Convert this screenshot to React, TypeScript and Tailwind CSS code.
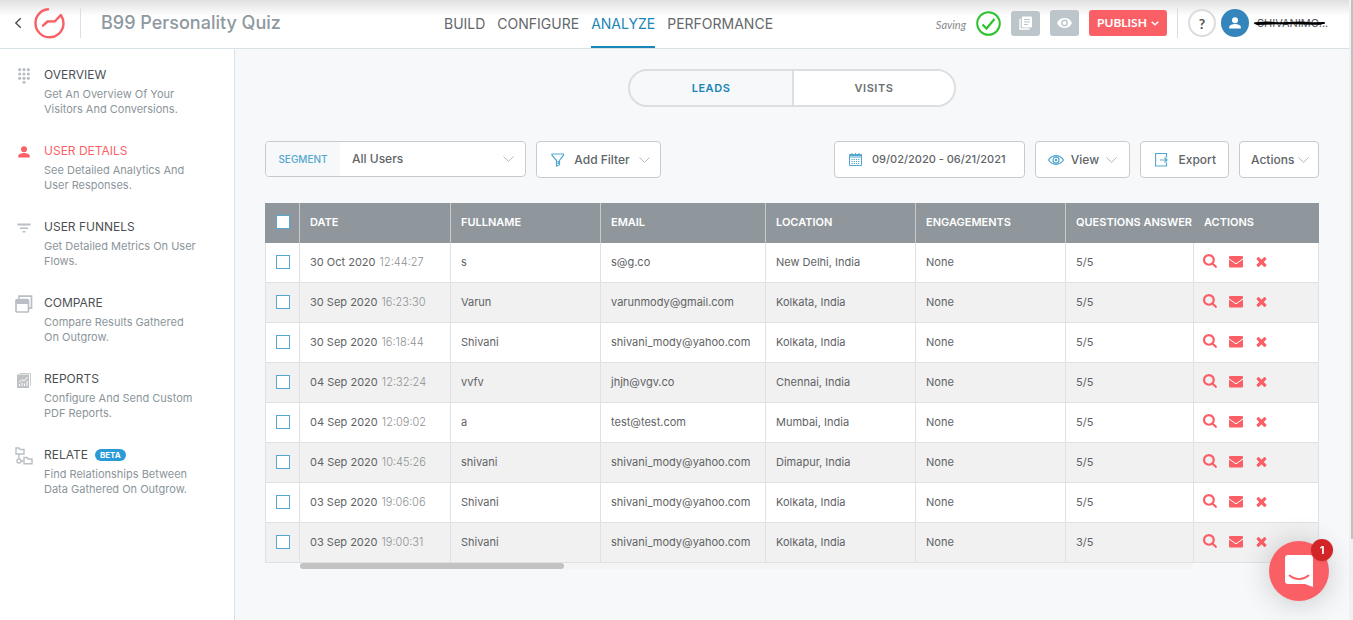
import type { ReactNode } from "react";

type Lead = {
  date: string;
  time: string;
  name: string;
  email: string;
  location: string;
  answered: string;
};

const leads: Lead[] = [
  { date: "30 Oct 2020", time: "12:44:27", name: "s", email: "s@g.co", location: "New Delhi, India", answered: "5/5" },
  { date: "30 Sep 2020", time: "16:23:30", name: "Varun", email: "varunmody@gmail.com", location: "Kolkata, India", answered: "5/5" },
  { date: "30 Sep 2020", time: "16:18:44", name: "Shivani", email: "shivani_mody@yahoo.com", location: "Kolkata, India", answered: "5/5" },
  { date: "04 Sep 2020", time: "12:32:24", name: "vvfv", email: "jhjh@vgv.co", location: "Chennai, India", answered: "5/5" },
  { date: "04 Sep 2020", time: "12:09:02", name: "a", email: "test@test.com", location: "Mumbai, India", answered: "5/5" },
  { date: "04 Sep 2020", time: "10:45:26", name: "shivani", email: "shivani_mody@yahoo.com", location: "Dimapur, India", answered: "5/5" },
  { date: "03 Sep 2020", time: "19:06:06", name: "Shivani", email: "shivani_mody@yahoo.com", location: "Kolkata, India", answered: "5/5" },
  { date: "03 Sep 2020", time: "19:00:31", name: "Shivani", email: "shivani_mody@yahoo.com", location: "Kolkata, India", answered: "3/5" },
];

function Chevron({ className = "text-[#b5b9bc]" }: { className?: string }) {
  return (
    <svg width="11" height="6" viewBox="0 0 11 6" fill="none" stroke="currentColor" className={`shrink-0 ${className}`} aria-hidden="true">
      <path d="M.5.5 5.5 5.3 10.5.5" />
    </svg>
  );
}

function KeypadIcon() {
  const dots = [1.7, 6, 10.3];
  return (
    <svg width="12" height="16" viewBox="0 0 12 16" fill="#b9bfc4" aria-hidden="true">
      {dots.map((y) => dots.map((x) => <circle key={`${x}-${y}`} cx={x} cy={y} r="1.6" />))}
      <circle cx="6" cy="14.3" r="1.5" />
    </svg>
  );
}

function PersonIcon({ className }: { className?: string }) {
  return (
    <svg width="12" height="12" viewBox="0 0 12 12" fill="currentColor" className={className} aria-hidden="true">
      <circle cx="6" cy="3.2" r="3" />
      <path d="M.2 11.5V10C.2 8 3.8 7 6 7s5.800 1 5.800 3v1.500z" />
    </svg>
  );
}

function FunnelLinesIcon() {
  return (
    <svg width="14" height="10" viewBox="0 0 14 10" fill="#b9bfc4" aria-hidden="true">
      <path d="M.5.500h13v2H.5zM3 4.500h8V6H3zM5.500 8h3v1.500h-3z" />
    </svg>
  );
}

function WindowsIcon() {
  return (
    <svg width="18" height="18" viewBox="0 0 18 18" fill="none" stroke="#b9bfc4" aria-hidden="true">
      <path d="M4 3.500V1.200h12.500v12H14" strokeWidth="1.700" />
      <rect x="1" y="4.500" width="12.500" height="12.500" rx="1" strokeWidth="1.700" />
      <path d="M1 5h12.500v4H1z" fill="#b9bfc4" stroke="none" />
    </svg>
  );
}

function ReportIcon() {
  return (
    <svg width="14" height="15" viewBox="0 0 14 15" aria-hidden="true">
      <path d="M2.500.500h11v12" fill="none" stroke="#c9cdd0" />
      <rect x="0" y="1.500" width="12" height="13.500" fill="#bfc2c4" />
      <path d="M2 9.500 5 6.500l2 1.500 3.500-4M2.500 13v-2M5 13V9.500M7.500 13v-2.500M10 13V8" fill="none" stroke="#fff" />
    </svg>
  );
}

function RelateIcon() {
  return (
    <svg width="18" height="18" viewBox="0 0 18 18" fill="none" stroke="#b9bfc4" strokeWidth="1.400" aria-hidden="true">
      <path d="M1 1h3l1 1.500h4V7H1zM9 10.500h3l1 1.500h4v4.700H9zM4 7.500v4M6 14h2.500" />
      <circle cx="4" cy="14" r="2" />
    </svg>
  );
}

function SearchIcon() {
  return (
    <svg width="15" height="15" viewBox="0 0 1792 1792" fill="currentColor" aria-hidden="true">
      <path d="M1152 704q0-185-131.500-316.500t-316.500-131.500-316.500 131.500-131.500 316.500 131.500 316.500 316.500 131.500 316.500-131.500 131.500-316.500zm512 832q0 52-38 90t-90 38q-54 0-90-38l-343-342q-179 124-399 124-143 0-273.500-55.500t-225-150-150-225-55.500-273.500 55.500-273.500 150-225 225-150 273.500-55.500 273.500 55.500 225 150 150 225 55.500 273.500q0 220-124 399l343 343q37 37 37 90z" />
    </svg>
  );
}

function MailIcon() {
  return (
    <svg width="14" height="12" viewBox="0 0 14 12" aria-hidden="true">
      <rect width="14" height="11.500" rx="1.200" fill="currentColor" />
      <path d="M0 3 7 7.800 14 3" fill="none" stroke="#fff" />
    </svg>
  );
}

function CrossIcon() {
  return (
    <svg width="15" height="15" viewBox="0 0 1792 1792" fill="currentColor" aria-hidden="true">
      <path d="M1490 1322q0 40-28 68l-136 136q-28 28-68 28t-68-28l-294-294-294 294q-28 28-68 28t-68-28l-136-136q-28-28-28-68t28-68l294-294-294-294q-28-28-28-68t28-68l136-136q28-28 68-28t68 28l294 294 294-294q28-28 68-28t68 28l136 136q28 28 28 68t-28 68l-294 294 294 294q28 28 28 68z" />
    </svg>
  );
}

const sections: { title: string; text: string; icon: ReactNode; active?: boolean; beta?: boolean }[] = [
  { title: "OVERVIEW", text: "Get An Overview Of Your Visitors And Conversions.", icon: <KeypadIcon /> },
  { title: "USER DETAILS", text: "See Detailed Analytics And User Responses.", icon: <PersonIcon className="text-[#fb5f66]" />, active: true },
  { title: "USER FUNNELS", text: "Get Detailed Metrics On User Flows.", icon: <FunnelLinesIcon /> },
  { title: "COMPARE", text: "Compare Results Gathered On Outgrow.", icon: <WindowsIcon /> },
  { title: "REPORTS", text: "Configure And Send Custom PDF Reports.", icon: <ReportIcon /> },
  { title: "RELATE", text: "Find Relationships Between Data Gathered On Outgrow.", icon: <RelateIcon />, beta: true },
];

function Header() {
  const tabs = ["BUILD", "CONFIGURE", "ANALYZE", "PERFORMANCE"];
  return (
    <header className="flex h-[49px] shrink-0 items-stretch border-b border-[#d8e1e5] bg-linear-to-b from-[#e0e0e0] to-white to-[16px]">
      <div className="flex w-[444px] shrink-0 items-center pl-[14px] pb-[3px]">
        <a href="#back" aria-label="Back" className="text-[#4c4f52]">
          <svg width="8" height="12" viewBox="0 0 8 12" fill="none" stroke="currentColor" strokeWidth="1.400" aria-hidden="true">
            <path d="M6.800 1.200 1.800 6l5 4.800" />
          </svg>
        </a>
        <a href="#home" aria-label="Home" className="ml-3">
          <svg width="31" height="32" viewBox="0 0 31 32" fill="none" stroke="#fb5f66" strokeWidth="2.400" strokeLinecap="round" strokeLinejoin="round" aria-hidden="true">
            <path d="M14 2.300C6.500 3.200 1.500 9 1.500 16a14 14 0 0 0 28 .500c0-3.500-1-6-2.700-8.500L21 14.300l-7.500.200-4.500 4.200" />
          </svg>
        </a>
        <span className="ml-[15px] h-[30px] w-px bg-[#d8e1e5]" />
        <h1 className="ml-5 text-lg font-medium text-[#8e989f]">B99 Personality Quiz</h1>
      </div>
      <nav className="flex gap-3 text-[14px]">
        {tabs.map((tab) => (
          <a
            key={tab}
            href={`#${tab.toLowerCase()}`}
            className={
              tab === "ANALYZE"
                ? "flex items-center border-b-2 border-[#1a86b8] text-[#1a86b8]"
                : "flex items-center border-b-2 border-transparent text-[#64686b]"
            }
          >
            {tab}
          </a>
        ))}
      </nav>
      <div className="ml-auto flex items-center gap-[10px] pr-5 pb-[2px]">
        <span className="pt-1 font-[Lato] text-[11px] italic text-[#85898c]">Saving</span>
        <svg width="25" height="25" viewBox="0 0 25 25" fill="none" stroke="#2ec22e" strokeWidth="2" aria-label="Saved">
          <circle cx="12.500" cy="12.500" r="11.300" />
          <path d="m6.500 13.500 4 4 8-9.500" strokeWidth="2.200" />
        </svg>
        <button aria-label="Templates" className="flex h-[25px] w-[29px] items-center justify-center rounded-[3px] bg-[#bcc5ca]">
          <svg width="14" height="14" viewBox="0 0 14 14" aria-hidden="true">
            <path d="M1 3v10h9.500" fill="none" stroke="#fff" strokeWidth="1.400" />
            <rect x="2.800" y=".5" width="10.200" height="11" rx="1" fill="#fff" />
            <path d="M5 3.500h6M5 6h6M5 8.500h4" stroke="#bcc5ca" />
          </svg>
        </button>
        <button aria-label="Preview" className="flex h-[26px] w-[29px] items-center justify-center rounded-[3px] bg-[#bcc5ca]">
          <svg width="15" height="10" viewBox="0 0 15 10" aria-hidden="true">
            <path d="M0 5C1.500 1.800 4.300 0 7.500 0S13.500 1.800 15 5c-1.500 3.200-4.300 5-7.500 5S1.500 8.200 0 5z" fill="#fff" />
            <circle cx="7.500" cy="5" r="2.700" fill="#fff" stroke="#bcc5ca" strokeWidth="1.400" />
          </svg>
        </button>
        <button className="flex h-[26px] w-[78px] items-center justify-center gap-1 rounded-[3px] bg-[#fb5f66] font-[Lato] text-[12px] font-bold text-white">
          PUBLISH
          <svg width="8" height="5" viewBox="0 0 8 5" fill="none" stroke="currentColor" strokeWidth="1.500" aria-hidden="true">
            <path d="m.7.700 3.300 3 3.300-3" />
          </svg>
        </button>
        <span className="h-[30px] w-px bg-[#dbdddf]" />
        <div className="flex items-center gap-[5px]">
          <button aria-label="Help" className="size-7 rounded-full border-2 border-[#dcdcdc] bg-white font-[Lato] text-[14px] font-bold text-[#555]">?</button>
          <button aria-label="Account" className="flex size-7 items-center justify-center rounded-full bg-[#3585bd] text-white">
            <PersonIcon />
          </button>
          <span className="relative ml-[3px] w-[72px] text-[11px] text-[#55595c]">
            SHIVANIMO...
            <svg className="absolute top-[5px] -left-[3px]" width="71" height="6" viewBox="0 0 71 6" fill="none" stroke="#000" aria-hidden="true">
              <path d="M1 3.300 12 2.500l18 1 15-1 14 .7 11-.2M3 4l30-1 34 1" strokeWidth="2" strokeLinecap="round" />
            </svg>
          </span>
        </div>
      </div>
    </header>
  );
}

function Sidebar() {
  return (
    <aside className="flex w-[235px] shrink-0 flex-col gap-[25px] border-r border-[#d8e1e5] bg-white pt-[17px]">
      {sections.map((s) => (
        <a key={s.title} href={`#${s.title.toLowerCase().replace(" ", "-")}`} className="flex gap-[10px] pl-[14px]">
          <span className="flex h-5 w-5 shrink-0 items-center justify-center">{s.icon}</span>
          <span className="flex flex-col gap-[3px]">
            <span className={`flex items-center gap-[7px] text-[12px] leading-[18px] ${s.active ? "text-[#fb5f66]" : "text-[#4c5054]"}`}>
              {s.title}
              {s.beta && <span className="rounded-full bg-[#2a9bd6] px-[5px] text-[8px] leading-3 font-bold text-white">BETA</span>}
            </span>
            <span className="w-[156px] text-[11px] leading-[15px] text-[#8b959b]">{s.text}</span>
          </span>
        </a>
      ))}
    </aside>
  );
}

const control = "flex h-[37px] shrink-0 items-center rounded border border-[#c8cbcd] bg-white font-medium text-[#606467]";

function Toolbar() {
  return (
    <div className="mt-[34px] flex items-start gap-[10px] text-[12px]">
      <button className="flex h-9 w-[261px] shrink-0 items-center overflow-hidden rounded border border-[#c8cbcd] bg-white font-medium text-[#606467]">
        <span className="flex h-full w-[74px] shrink-0 items-center justify-center bg-[#f6f8fa] text-[10px] text-[#55a7cf]">SEGMENT</span>
        <span className="ml-3">All Users</span>
        <Chevron className="mr-[11px] ml-auto text-[#b5b9bc]" />
      </button>
      <button className={`${control} w-[125px] justify-between pr-[10px] pl-[14px]`}>
        <svg width="14" height="14" viewBox="0 0 14 14" fill="none" stroke="#55a7cf" strokeWidth="1.200" aria-hidden="true">
          <path d="M1 1h11.500v1.200L8.500 7.500v4.200L5.500 13V7.500L1 2.200zM7.200 8v3" />
        </svg>
        Add Filter
        <Chevron />
      </button>
      <button className={`${control} ml-auto w-[191px] gap-[10px] pl-[14px] text-[11px]`}>
        <svg width="13" height="13" viewBox="0 0 13 13" fill="none" stroke="#55a7cf" aria-hidden="true">
          <path d="M.5 1.500h12v11H.5zM.5 4h12M.5 2.500h12M3 0v2M6.500 0v2M10 0v2" />
          <path d="M2.500 6.500h8M2.500 8.500h8M2.500 10.500h8" strokeDasharray="1.200 1" />
        </svg>
        09/02/2020 - 06/21/2021
      </button>
      <button className={`${control} w-[95px] justify-between px-3`}>
        <svg width="16" height="10" viewBox="0 0 16 10" fill="none" stroke="#55a7cf" strokeWidth="1.300" aria-hidden="true">
          <path d="M.6 5C2.500 2 5 .700 8 .700S13.500 2 15.400 5C13.500 8 11 9.300 8 9.300S2.500 8 .6 5z" />
          <circle cx="8" cy="5" r="3" />
          <circle cx="8" cy="5" r="1.300" fill="#55a7cf" stroke="none" />
        </svg>
        View
        <Chevron />
      </button>
      <button className={`${control} w-[89px] justify-between pr-3 pl-[14px]`}>
        <svg width="13" height="14" viewBox="0 0 13 14" fill="none" stroke="#55a7cf" strokeWidth="1.200" aria-hidden="true">
          <path d="M11.500 4.500V.500h-11v12.500h11V9.500M5 7h7M9.500 4.500 12 7 9.500 9.500" />
        </svg>
        Export
      </button>
      <button className={`${control} w-20 justify-between pr-[9px] pl-[11px]`}>
        Actions
        <Chevron />
      </button>
    </div>
  );
}

const box = "block size-[14px] appearance-none border border-[#55a7cf] bg-white checked:bg-[#55a7cf]";
const head = "border-r border-[#c6cbce] px-[10px] pb-[2px] text-left font-semibold whitespace-nowrap";
const cell = "border-r border-b border-[#e0e1e2] px-[10px] whitespace-nowrap";

function LeadsTable() {
  return (
    <div className="mt-[25px]">
      <table className="w-full table-fixed border-separate border-spacing-0 text-[11px] text-[#5f6366]">
        <colgroup>
          <col className="w-[35px]" />
          <col className="w-[151px]" />
          <col className="w-[150px]" />
          <col className="w-[165px]" />
          <col className="w-[150px]" />
          <col className="w-[150px]" />
          <col />
          <col className="w-[125px]" />
        </colgroup>
        <thead>
          <tr className="h-10 bg-[#8f979d] text-white">
            <th className="border-r border-[#c6cbce] pb-[2px] pl-[11px]">
              <input type="checkbox" aria-label="Select all leads" className={box} />
            </th>
            <th className={head}>DATE</th>
            <th className={head}>FULLNAME</th>
            <th className={head}>EMAIL</th>
            <th className={head}>LOCATION</th>
            <th className={head}>ENGAGEMENTS</th>
            <th className="pb-[2px] pl-[10px] text-left font-semibold whitespace-nowrap">QUESTIONS ANSWER</th>
            <th className="px-[10px] pb-[2px] text-left font-semibold">ACTIONS</th>
          </tr>
        </thead>
        <tbody>
          {leads.map((lead) => (
            <tr key={lead.date + lead.time} className="h-10 bg-white even:bg-[#f1f1f1]">
              <td className="border-r border-b border-l border-[#e0e1e2] pb-[2px] pl-[10px]">
                <input type="checkbox" aria-label={`Select ${lead.name}, ${lead.time}`} className={box} />
              </td>
              <td className={cell}>
                {lead.date} <span className="ml-px font-light text-[#8d9194]">{lead.time}</span>
              </td>
              <td className={cell}>{lead.name}</td>
              <td className={cell}>{lead.email}</td>
              <td className={cell}>{lead.location}</td>
              <td className={cell}>None</td>
              <td className={cell}>{lead.answered}</td>
              <td className="border-r border-b border-[#e0e1e2] pb-[2px] pl-[9px]">
                <div className="flex items-center gap-[11px] text-[#fb5f66]">
                  <button aria-label="View lead"><SearchIcon /></button>
                  <button aria-label="Email lead"><MailIcon /></button>
                  <button aria-label="Delete lead"><CrossIcon /></button>
                </div>
              </td>
            </tr>
          ))}
        </tbody>
      </table>
      <div className="mr-[126px] ml-[35px] h-[6px] bg-[#f4f4f4]">
        <div className="h-full w-[264px] rounded-full bg-[#c2c2c2]" />
      </div>
    </div>
  );
}

function ChatButton() {
  return (
    <button
      aria-label="Open chat, 1 unread message"
      className="fixed right-6 bottom-[19px] flex size-[60px] items-center justify-center rounded-full bg-[#fb5f66] shadow-[0_2px_30px_rgba(0,0,0,0.2)]"
    >
      <svg width="28" height="32" viewBox="0 0 28 32" aria-hidden="true">
        <path d="M3 0h22a3 3 0 0 1 3 3v29l-8-3H3a3 3 0 0 1-3-3V3a3 3 0 0 1 3-3z" fill="#fff" />
        <path d="M4.500 20.500c6 4.600 13 4.600 19 0" fill="none" stroke="#fb5f66" strokeWidth="1.800" strokeLinecap="round" />
      </svg>
      <span className="absolute -top-[2px] -right-1 flex size-[22px] items-center justify-center rounded-full bg-[#d32528] text-[11px] font-bold text-white shadow">1</span>
    </button>
  );
}

export default function App() {
  return (
    <div className="flex min-h-screen bg-[#f6f8fa] font-[Inter,sans-serif]">
      <div className="flex min-w-0 flex-1 flex-col">
        <Header />
        <div className="flex flex-1">
          <Sidebar />
          <main className="min-w-0 flex-1 px-[30px] pt-5">
            <div className="mx-auto flex h-[38px] w-[328px] overflow-hidden rounded-full border-2 border-[#dcdee0] text-[11px] font-semibold tracking-wider">
              <button className="w-[164px] border-r-2 border-[#dcdee0] text-[#1a86b8]">LEADS</button>
              <button className="flex-1 bg-white text-[#6b6f72]">VISITS</button>
            </div>
            <Toolbar />
            <LeadsTable />
          </main>
        </div>
      </div>
      <div className="w-1 shrink-0 bg-[#f0f1f2] pl-[2px]">
        <div className="h-[87vh] bg-[#c1c1c1]" />
      </div>
      <ChatButton />
    </div>
  );
}
